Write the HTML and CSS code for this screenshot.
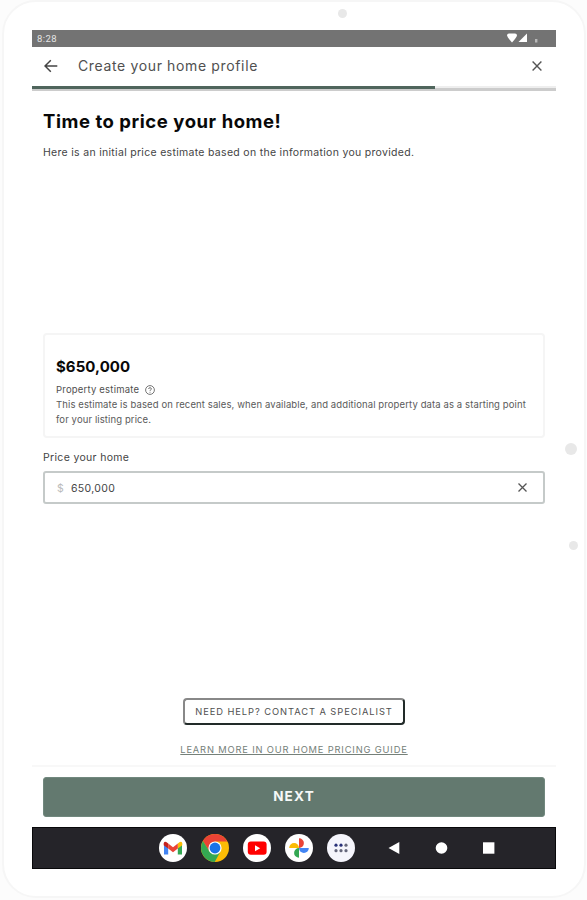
FILE: index.html
```html
<!DOCTYPE html>
<html lang="en">
<head>
<meta charset="utf-8">
<title>Create your home profile</title>
<link rel="stylesheet" href="styles.css">
</head>
<body>
<div class="tablet">
  <span class="sensor camera"></span>
  <span class="sensor power"></span>
  <span class="sensor volume"></span>
  <div class="screen">
    <div class="status">
      <span class="time">8:28</span>
      <svg class="signals" width="34" height="12" viewBox="0 0 34 12" fill="#fff"><path d="M0 3.4Q0 1.8 2 1.6H8Q10 1.8 10 3.4Q9.5 5.5 5 10.5Q.5 5.5 0 3.4Z"/><path d="M20 1.5V10H11.5Z"/><path d="M28 7h2.4v3.5H28z" opacity=".5"/></svg>
    </div>
    <header class="topbar">
      <svg width="14" height="14" viewBox="0 0 14 14" fill="none" stroke="#444" stroke-width="1.5"><path d="M13.3 7H1.2M6.8 1.2L1 7l5.8 5.8"/></svg>
      <span class="title">Create your home profile</span>
      <svg width="10" height="10" viewBox="0 0 10 10" fill="none" stroke="#555" stroke-width="1.4"><path d="M.6.6l8.8 8.8M9.4.6L.6 9.4"/></svg>
    </header>
    <div class="progress"><div class="done"></div></div>
    <main class="content">
      <h1>Time to price your home!</h1>
      <p class="intro">Here is an initial price estimate based on the information you provided.</p>
      <section class="estimate">
        <div class="price">$650,000</div>
        <div class="label">Property estimate
          <svg width="10" height="10" viewBox="0 0 10 10" fill="none" stroke="#666" stroke-width=".9"><circle cx="5" cy="5" r="4.4"/><path d="M3.6 4Q3.7 2.7 5 2.7T6.4 3.9Q6.4 4.6 5.6 5T5 6M5 6.8v.9"/></svg>
        </div>
        <p class="note">This estimate is based on recent sales, when available, and additional property data as a starting point<br>for your listing price.</p>
      </section>
      <div class="field-label">Price your home</div>
      <div class="field">
        <span class="currency">$</span><span class="amount">650,000</span>
        <svg width="9" height="9" viewBox="0 0 9 9" fill="none" stroke="#555" stroke-width="1.3"><path d="M.5.5l8 8M8.5.5l-8 8"/></svg>
      </div>
      <div class="help">
        <a class="contact">NEED HELP? CONTACT A SPECIALIST</a>
        <a class="guide">LEARN MORE IN OUR HOME PRICING GUIDE</a>
      </div>
    </main>
    <footer class="footer"><div class="next">NEXT</div></footer>
    <nav class="dock">
      <svg class="app" viewBox="0 0 28 28"><circle cx="14" cy="14" r="14" fill="#fff"/><path d="M5 9v11.5h4.2V12z" fill="#4285f4"/><path d="M23 9v11.5h-4.2V12z" fill="#34a853"/><path d="M18.8 9.6l2-1.6Q23 6.9 23.3 9.3v2l-4.5 3.3z" fill="#fbbc04"/><path d="M9.2 9.6l-2-1.6Q5 6.9 4.7 9.3v2l4.5 3.3z" fill="#c5221f"/><path d="M9.2 9.6l4.8 3.7 4.8-3.7v5L14 18.2l-4.8-3.6z" fill="#ea4335"/></svg>
      <svg class="app" viewBox="0 0 28 28"><circle cx="14" cy="14" r="14" fill="#fbbc05"/><path d="M14 7.5H26.3A14 14 0 0 0 1.9 7L8.4 17.2z" fill="#ea4335"/><path d="M1.9 7A14 14 0 0 0 13.7 28L19.6 17.2 14 20.5 8.4 17.2z" fill="#34a853"/><circle cx="14" cy="14" r="6.6" fill="#fff"/><circle cx="14" cy="14" r="5.4" fill="#1a73e8"/></svg>
      <svg class="app" viewBox="0 0 28 28"><circle cx="14" cy="14" r="14" fill="#fff"/><rect x="4.8" y="7.6" width="18.8" height="13.2" rx="3" fill="#f00"/><path d="M12 11.2v6l5.2-3z" fill="#fff"/></svg>
      <svg class="app" viewBox="0 0 28 28"><circle cx="14" cy="14" r="14" fill="#fff"/><path d="M14 14V4.2A4.9 4.9 0 0 1 14 14z" fill="#ea4335"/><path d="M14 14h9.8A4.9 4.9 0 0 1 14 14z" fill="#4285f4"/><path d="M14 14v9.8A4.9 4.9 0 0 1 14 14z" fill="#34a853"/><path d="M14 14H4.2A4.9 4.9 0 0 1 14 14z" fill="#fbbc04"/></svg>
      <svg class="app" viewBox="0 0 28 28"><circle cx="14" cy="14" r="14" fill="#f5f5fc"/><g fill="#293179"><circle cx="9" cy="11.2" r="1.6"/><circle cx="14" cy="11.2" r="1.6"/></g><g fill="#65677b"><circle cx="19" cy="11.2" r="1.6"/><circle cx="9" cy="16.7" r="1.6"/><circle cx="14" cy="16.7" r="1.6"/><circle cx="19" cy="16.7" r="1.6"/></g></svg>
      <svg class="keys" width="108" height="14" viewBox="0 0 108 14" fill="#fff"><path d="M11.3 1v12L.5 7z"/><circle cx="53.5" cy="7" r="5.8"/><rect x="95" y="1.3" width="11.4" height="11.4"/></svg>
    </nav>
  </div>
</div>
</body>
</html>
```
FILE: styles.css
```css
* { box-sizing: border-box; }
body { margin: 0; background: #fcfcfc; font-family: Inter, "Liberation Sans", sans-serif; color: #444; }
svg { display: block; flex: none; }
p, h1 { margin: 0; }
.tablet { position: relative; width: 584px; height: 898px; margin-left: 2px; padding: 28px 28px; background: #fff; border: 2px solid #f6f6f6; border-radius: 34px; }
.sensor { position: absolute; border-radius: 50%; background: #e8e8e8; }
.camera { left: 334px; top: 7px; width: 9px; height: 9px; }
.power { left: 561px; top: 441px; width: 12px; height: 12px; }
.volume { left: 565px; top: 539px; width: 9px; height: 9px; }
.screen { width: 524px; height: 839px; display: flex; flex-direction: column; }
.status { height: 16.5px; background: #737373; display: flex; align-items: center; justify-content: space-between; padding: 0 15px 0 5px; }
.time { font: 9.5px Roboto, sans-serif; letter-spacing: .4px; color: #e4e4e4; }
.topbar { height: 39.5px; display: flex; align-items: center; padding: 0 14px 0 12px; }
.title { flex: 1; margin-left: 20px; padding-bottom: 2px; font-size: 14px; letter-spacing: .64px; color: #505050; }
.progress { height: 5px; background: linear-gradient(#eee 0 2px, #ccc 2px 5px); }
.done { width: 403px; height: 3px; background: #4f655c; }
.content { flex: 1; padding: 0 11px; display: flex; flex-direction: column; }
h1 { margin-top: 18px; line-height: 24px; font-size: 18.5px; font-weight: 700; letter-spacing: .55px; color: #080808; white-space: nowrap; }
.intro { margin-top: 12px; font-size: 10.5px; line-height: 16px; letter-spacing: .3px; white-space: nowrap; }
.estimate { margin-top: 172px; height: 105px; border: 2px solid #f5f5f5; border-radius: 4px; padding: 22px 11px 0; }
.price { font-size: 15px; line-height: 20px; font-weight: 700; letter-spacing: .05px; color: #080808; }
.label { display: flex; align-items: center; gap: 6px; margin-top: 5px; font-size: 9.5px; line-height: 15px; letter-spacing: .2px; color: #505050; }
.note { font-size: 9.5px; line-height: 15px; letter-spacing: .11px; color: #5a5a5a; white-space: nowrap; }
.field-label { margin-top: 12px; font-size: 10.5px; line-height: 16px; letter-spacing: .33px; }
.field { margin-top: 5px; height: 33px; border: 2px solid #c5cac9; border-radius: 3px; display: flex; align-items: center; padding: 0 16px 0 12px; font-size: 10.5px; }
.currency { color: #bbb; width: 14px; padding-top: 1px; }
.amount { flex: 1; letter-spacing: .33px; padding-top: 1px; }
.help { margin-top: auto; display: flex; flex-direction: column; align-items: center; }
.contact { width: 222px; height: 27px; border: 2px solid #222b29; border-top-color: #888; border-left-color: #888; border-radius: 4px; font-size: 9.3px; line-height: 23px; letter-spacing: .95px; text-align: center; white-space: nowrap; color: #505050; }
.guide { margin: 17px 0 7px; font-size: 9.3px; line-height: 16px; letter-spacing: .85px; text-decoration: underline; text-underline-offset: 1px; white-space: nowrap; color: #758079; }
.footer { height: 62px; border-top: 2px solid #f8f8f8; padding: 10px 11px 0; }
.next { height: 40px; border: 1px solid #71887e; border-radius: 3px; background: #63796f; color: #f5f8f7; text-align: center; font-size: 13.5px; line-height: 37px; font-weight: 700; letter-spacing: 1.2px; }
.dock { height: 42px; border: 1px solid #08080a; background: #252429; display: flex; align-items: center; gap: 14px; padding-left: 126px; }
.app { width: 28px; height: 28px; }
.keys { margin-left: 19px; }
```
